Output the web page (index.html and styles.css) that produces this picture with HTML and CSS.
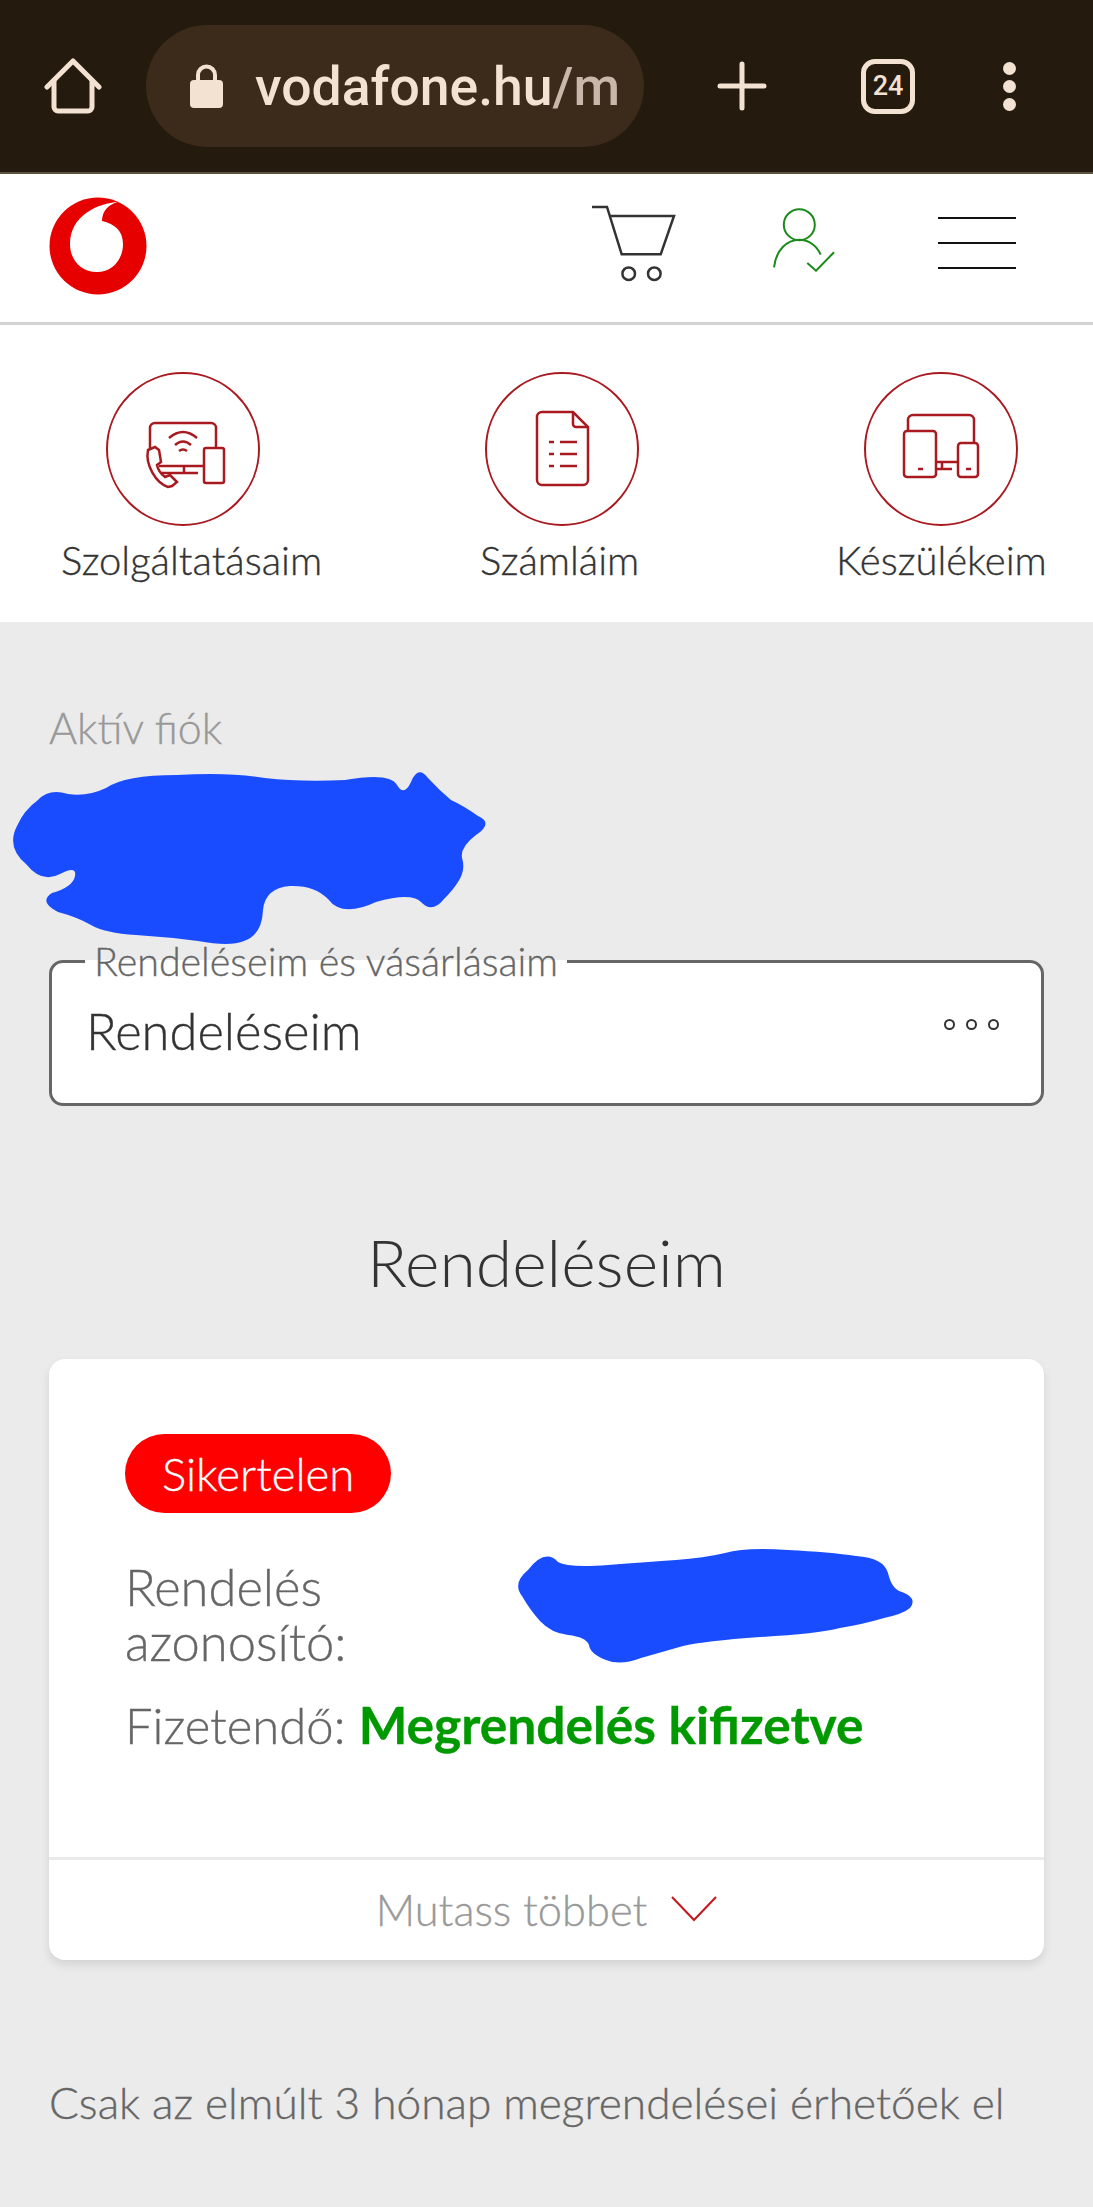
FILE: index.html
```html
<!DOCTYPE html>
<html lang="hu">
<head>
  <meta charset="UTF-8"/>
  <meta name="viewport" content="width=device-width, initial-scale=1"/>
  <title>Rendeléseim | Vodafone</title>
  <link rel="stylesheet" href="styles.css">
</head>
<body>

  <!-- browser chrome -->
  <div class="toolbar">
    <svg class="home-icon" width="58" height="58" viewBox="0 0 58 58" fill="none" stroke="#f3e2d2" stroke-width="5" stroke-linecap="round" stroke-linejoin="round">
      <path d="M3 30 29 4 55 30"/>
      <path d="M10 24V50a4 4 0 0 0 4 4H44a4 4 0 0 0 4-4V24"/>
    </svg>
    <div class="url-pill">
      <svg width="33" height="44" viewBox="0 0 33 44">
        <path d="M8 18V11a8.5 8.5 0 0 1 17 0V18" fill="none" stroke="#f3e2d2" stroke-width="4"/>
        <rect x="0" y="16" width="33" height="28" rx="4" fill="#f3e2d2"/>
      </svg>
      <span class="url-text">vodafone.hu<span class="url-path">/m</span></span>
    </div>
    <svg class="plus-icon" width="50" height="50" viewBox="0 0 50 50" stroke="#f3e2d2" stroke-width="5" stroke-linecap="round">
      <path d="M3 25H47M25 3V47"/>
    </svg>
    <div class="tab-count">24</div>
    <div class="menu-dots"><i></i><i></i><i></i></div>
  </div>

  <!-- site header -->
  <header class="site-header">
    <svg class="logo" width="98" height="98" viewBox="0 0 98 98">
      <circle cx="49" cy="49" r="48.5" fill="#e60000"/>
      <path d="M69 5C50 6 21 18 21 47C21 63 32 75 48 75C63 75 74 63 74 47C74 34 66 27 53 24C53 14 60 7 69 5Z" fill="#fff"/>
    </svg>
    <svg class="cart-icon" width="86" height="78" viewBox="0 0 86 78" fill="none" stroke="#333" stroke-width="2.5">
      <path d="M2 2H17L31.7 49.3H70.7L84 11H19.5"/>
      <circle cx="38.7" cy="68.7" r="6.3"/>
      <circle cx="64.3" cy="68.7" r="6.3"/>
    </svg>
    <svg class="user-icon" width="66" height="66" viewBox="0 0 66 66" fill="none" stroke="#1a8a1a" stroke-width="2">
      <circle cx="29.3" cy="18.7" r="15.5"/>
      <path d="M4 61.3C6 44 17 33.7 29.3 33.7C39 33.7 47 40 50.7 48.7"/>
      <path d="M37.3 57 46 64.7 64 46.3"/>
    </svg>
    <div class="burger"><i></i><i></i><i></i></div>
  </header>

  <nav class="quick-nav">
    <a class="quick-item" href="#">
      <span class="quick-circle quick-circle-first">
        <svg width="154" height="154" viewBox="0 0 154 154" fill="none" stroke="#a81a1f" stroke-width="2.5">
          <path d="M44 80V56a5 5 0 0 1 5-5H105a5 5 0 0 1 5 5V76"/>
          <path d="M53 94H98M78 94V101M53 101H92"/>
          <path d="M63 66Q77 54 91 66M69 73Q77 66 85 73M73 79Q77 76 81 79"/>
          <rect x="98" y="76" width="20" height="35" rx="2"/>
          <path d="M42 78l7-3 4 3 2 12-4 3c1 5 4 9 8 12l5-2 7 7-5 4-4 1c-12-4-23-22-20-37z" fill="#fff"/>
        </svg>
      </span>
      <span class="quick-label">Szolgáltatásaim</span>
    </a>
    <a class="quick-item" href="#">
      <span class="quick-circle quick-circle-mid">
        <svg width="154" height="154" viewBox="0 0 154 154" fill="none" stroke="#a81a1f" stroke-width="2.5">
          <path d="M88 40H57a5 5 0 0 0-5 5V108a5 5 0 0 0 5 5H98a5 5 0 0 0 5-5V55Z"/>
          <path d="M88 40V52a3 3 0 0 0 3 3H103"/>
          <path d="M64 70H69M75 70H92M64 82H69M75 82H92M64 94H69M75 94H92"/>
        </svg>
      </span>
      <span class="quick-label">Számláim</span>
    </a>
    <a class="quick-item" href="#">
      <span class="quick-circle">
        <svg width="154" height="154" viewBox="0 0 154 154" fill="none" stroke="#a81a1f" stroke-width="2.5">
          <path d="M44 59V48a5 5 0 0 1 5-5H105a5 5 0 0 1 5 5V71"/>
          <rect x="40" y="59" width="32" height="46" rx="3"/>
          <rect x="94" y="71" width="20" height="34" rx="3"/>
          <path d="M54 97H59M102 97H107M72 90H94M78 90V97M72 97H88"/>
        </svg>
      </span>
      <span class="quick-label">Készülékeim</span>
    </a>
  </nav>

  <main class="content">
    <p class="account-label">Aktív fiók</p>

    <fieldset class="select-box">
      <legend>Rendeléseim és vásárlásaim</legend>
      <span class="select-value">Rendeléseim</span>
      <span class="select-dots"><i></i><i></i><i></i></span>
    </fieldset>

    <h2 class="page-title">Rendeléseim</h2>

    <section class="order-card">
      <div class="order-body">
        <span class="status-badge">Sikertelen</span>
        <p class="order-id">Rendelés<br>azonosító:</p>
        <p class="order-pay">Fizetendő: <strong>Megrendelés kifizetve</strong></p>
      </div>
      <div class="order-more">
        Mutass többet
        <svg width="46" height="26" viewBox="0 0 46 26" fill="none" stroke="#c4161c" stroke-width="2">
          <path d="M1 1 23 24 45 1"/>
        </svg>
      </div>
    </section>

    <p class="note">Csak az elmúlt 3 hónap megrendelései érhetőek el</p>
  </main>

  <!-- blue scribbles painted over the private data -->
  <svg class="scribbles" width="1093" height="2207" viewBox="0 0 1093 2207" fill="#1a4cff">
    <path d="M38 800Q49 788 68 794Q87 797 106 788Q125 775 177 775Q230 772 265 778Q300 782 345 780Q390 772 397 785Q404 797 411 782Q418 765 428 778Q439 790 451 800Q464 806 478 816Q494 823 476 835Q460 847 462 858Q466 870 458 882Q453 890 444 899Q432 914 421 902Q411 892 376 902Q342 918 328 899Q314 885 290 886Q265 888 263 910Q262 935 244 941Q230 947 198 941Q167 937 136 935Q105 933 91 925Q77 917 58 912Q38 902 52 893Q73 887 75 876Q77 865 60 874Q42 884 26 864Q6 847 17 826Q24 810 38 800Z"/>
    <path d="M528 1570Q545 1548 558 1562Q568 1568 608 1565Q648 1562 676 1560Q704 1558 725 1553Q746 1547 788 1550Q830 1552 856 1556Q884 1558 888 1573Q892 1590 902 1592Q918 1598 910 1608Q903 1614 884 1618Q864 1624 840 1628Q816 1634 760 1637Q704 1641 683 1646Q662 1652 641 1658Q620 1666 606 1660Q590 1654 589 1645Q586 1637 568 1635Q551 1633 540 1621Q530 1610 522 1596Q512 1583 528 1570Z"/>
  </svg>

</body>
</html>
```

FILE: styles.css
```css
* {
  box-sizing: border-box;
}

body {
  margin: 0;
  position: relative;
  width: 1093px;
  height: 2207px;
  overflow: hidden;
  background-color: #ebebeb;
  font-family: Lato, "Open Sans", sans-serif;
  font-weight: 300;
  color: #333;
  -webkit-text-stroke: 0.35px currentColor;  /* Lato light is a bit too thin on its own */
}

/* === BROWSER BAR === */
.toolbar {
  display: flex;
  align-items: center;
  height: 174px;
  padding-left: 44px;
  background-color: #241a0e;
  border-bottom: 2px solid #5b5340;
  -webkit-text-stroke: 0;
}

.home-icon {
  margin-right: 44px;
}

.url-pill {
  display: flex;
  align-items: center;
  gap: 32px;
  width: 498px;
  height: 122px;
  margin-right: 73px;
  padding-left: 44px;
  border-radius: 61px;
  background-color: #3c2b1b;
  overflow: hidden;
  white-space: nowrap;
}

.url-text {
  font-family: Roboto, sans-serif;
  font-weight: 500;
  font-size: 53.5px;
  color: #f3e2d2;
}

.url-path {
  color: #c7b8a9;
}

.plus-icon {
  margin-right: 94px;
}

.tab-count {
  display: flex;
  align-items: center;
  justify-content: center;
  width: 54px;
  height: 55px;
  margin-right: 88px;
  border: 5px solid #f3e2d2;
  border-radius: 14px;
  font-family: Roboto, sans-serif;
  font-weight: 500;
  font-size: 27px;
  color: #f3e2d2;
}

.menu-dots {
  display: flex;
  flex-direction: column;
  gap: 5px;
}

.menu-dots i {
  width: 13px;
  height: 13px;
  border-radius: 50%;
  background-color: #f3e2d2;
}

/* === SITE HEADER === */
.site-header {
  display: flex;
  align-items: center;
  height: 151px;
  padding-left: 49px;
  background-color: #fff;
  border-bottom: 3px solid #d2d2d2;
}

.logo {
  margin-top: -4px;
}

.cart-icon {
  margin-top: -8px;
  margin-left: 443px;
  margin-right: 94px;
}

.user-icon {
  margin-top: -18px;
  margin-right: 102px;
}

.burger {
  display: flex;
  flex-direction: column;
  gap: 23px;
  width: 78px;
  margin-top: -11px;
}

.burger i {
  height: 2px;
  background-color: #111;
}

/* === QUICK LINKS === */
.quick-nav {
  display: grid;
  grid-template-columns: 419px 356px auto;
  height: 297px;
  padding: 47px 0 0 61px;
  background-color: #fff;
}

.quick-item {
  display: flex;
  flex-direction: column;
  align-items: center;
  align-self: start;
  justify-self: start;
  text-decoration: none;
  color: #333;
}

.quick-circle {
  width: 154px;
  height: 154px;
  border: 2.5px solid #a81a1f;
  border-radius: 50%;
}

.quick-circle svg {
  display: block;
  margin: -2.5px;
}

.quick-circle-first {
  margin-right: 17px;
}

.quick-circle-mid {
  margin-left: 5px;
}

.quick-label {
  margin-top: 11px;
  font-size: 40px;
  line-height: 46px;
}

/* === MAIN === */
.content {
  padding: 0 49px;
}

.account-label {
  margin: 0;
  padding-top: 83px;
  font-size: 43px;
  line-height: 46px;
  color: #999;
}

.select-box {
  position: relative;
  display: flex;
  align-items: center;
  justify-content: space-between;
  height: 165px;
  min-width: 0;
  margin: 190px 0 0;
  padding: 0 42px 24px 34px;
  background-color: #fff;
  border: 3px solid #666;
  border-radius: 14px;
}

.select-box legend {
  margin-left: -1px;
  padding: 0 9px;
  font-size: 39.4px;
  line-height: 40px;
  color: #666;
}

.select-value {
  font-size: 50.7px;
  color: #333;
}

.select-dots {
  display: flex;
  gap: 11px;
  margin-bottom: 12px;
}

.select-dots i {
  width: 11px;
  height: 11px;
  border: 2px solid #333;
  border-radius: 50%;
}

.page-title {
  margin: 118px 0 0;
  font-size: 66px;
  line-height: 76px;
  font-weight: 300;
  text-align: center;
  color: #333;
  -webkit-text-stroke: 0;
}

/* === ORDER CARD === */
.order-card {
  margin-top: 59px;
  height: 601px;
  background-color: #fff;
  border-radius: 16px;
  box-shadow: 0 5px 10px rgba(0, 0, 0, 0.1);
}

.order-body {
  height: 501px;
  padding: 75px 76px 0;
  border-bottom: 3px solid #ebebeb;
}

.status-badge {
  display: inline-block;
  height: 79px;
  padding: 0 37px;
  border-radius: 40px;
  background-color: #f00;
  font-size: 45.5px;
  line-height: 79px;
  color: #fff;
}

.order-id {
  margin: 46px 0 0;
  font-size: 50.7px;
  line-height: 55px;
  color: #666;
}

.order-pay {
  margin: 28px 0 0;
  font-size: 49px;
  line-height: 55px;
  color: #666;
}

.order-pay strong {
  font-size: 51.5px;
  font-weight: 700;
  color: #090;
}

.order-more {
  display: flex;
  align-items: center;
  justify-content: center;
  gap: 24px;
  height: 97px;
  font-size: 43.4px;
  color: #999;
}

.note {
  margin: 117px 0 0;
  font-size: 44.2px;
  line-height: 50px;
  color: #666;
  white-space: nowrap;
}

.scribbles {
  position: absolute;
  top: 0;
  left: 0;
  pointer-events: none;
}
```
